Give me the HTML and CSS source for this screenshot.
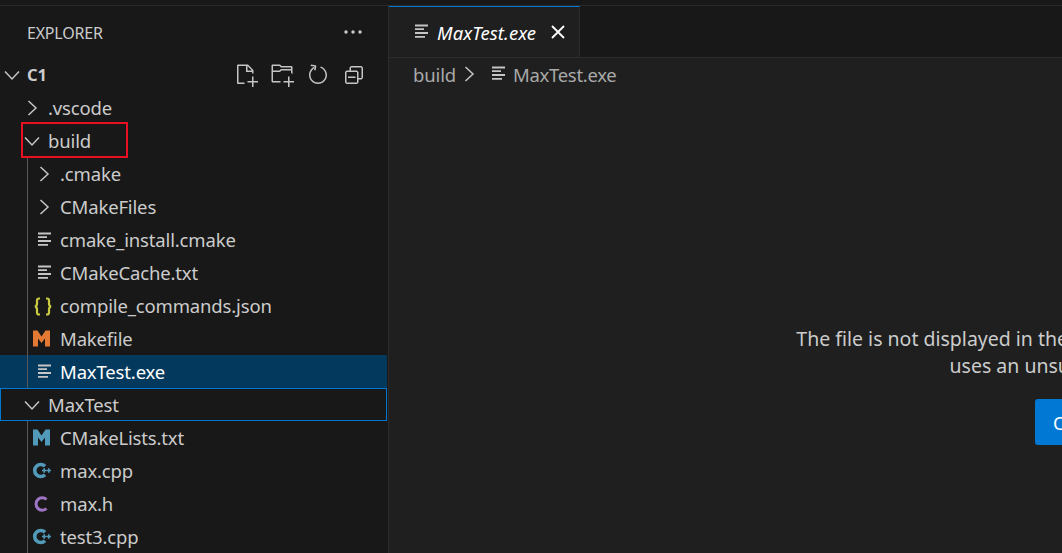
FILE: index.html
```html
<!DOCTYPE html>
<html lang="en">
<head>
<meta charset="utf-8">
<title>MaxTest.exe</title>
<link rel="stylesheet" href="styles.css">
</head>
<body>
<svg class="defs" width="0" height="0" aria-hidden="true">
  <symbol id="right" viewBox="0 0 24 24"><path d="M8.500 5l7.500 7-7.500 7" fill="none" stroke="currentColor" stroke-width="1.500"/></symbol>
  <symbol id="down" viewBox="0 0 24 24"><path d="M5 8.500l7 7.500 7-7.500" fill="none" stroke="currentColor" stroke-width="1.500"/></symbol>
  <symbol id="lines" viewBox="0 0 24 24"><path d="M6 5.500h13M6 9.200h9M6 13h13M6 16.800h10" fill="none" stroke="#c5c5c5" stroke-width="1.800"/></symbol>
  <symbol id="cpp" viewBox="0 0 24 24"><path d="M13 7.300a6 6 0 1 0 0 8.400" fill="none" stroke="#519aba" stroke-width="3.600"/><path d="M10 11.500h4.400M12.200 9.300v4.400M14.600 11.500h4.400M16.800 9.300v4.400" fill="none" stroke="#519aba" stroke-width="1.600"/></symbol>
  <symbol id="c" viewBox="0 0 24 24"><path d="M14.500 7.500a6.200 6.200 0 1 0 0 9" fill="none" stroke="#a074c4" stroke-width="3"/></symbol>
  <symbol id="m" viewBox="0 0 24 24"><path d="M1 19.500V3.500h4.500l4 6 4-6H18v16h-5v-8l-3.500 4.500L6 11.500v8z"/></symbol>
  <symbol id="json" viewBox="0 0 24 24"><path d="M8 4.500H7q-2 0-2 2v3q0 2.500-2 3 2 .5 2 3v3q0 2 2 2h1M14 4.500h1q2 0 2 2v3q0 2.500 2 3-2 .5-2 3v3q0 2-2 2h-1" fill="none" stroke="#cbcb41" stroke-width="2.200"/></symbol>
</svg>
<div class="titlestrip"></div>
<div class="workbench">
  <aside class="sidebar">
    <header class="side-head">
      <span class="side-title">EXPLORER</span>
      <svg class="dots" width="24" height="24" viewBox="0 0 24 24"><circle cx="5" cy="12" r="1.700"/><circle cx="12" cy="12" r="1.700"/><circle cx="19" cy="12" r="1.700"/></svg>
    </header>
    <div class="row root">
      <svg class="ico"><use href="#down"/></svg>
      <span class="label strong">C1</span>
      <div class="actions">
        <svg viewBox="0 0 16 16"><path fill-rule="evenodd" clip-rule="evenodd" d="M9.500 1.100l3.400 3.500.1.400v2h-1V6H8V2H3v11h4v1H2.500l-.5-.5v-12l.5-.5h6.700l.3.1zM9 2v3h2.900L9 2zm4 14h-1v-3H9v-1h3V9h1v3h3v1h-3v3z"/></svg>
        <svg viewBox="0 0 16 16"><path fill-rule="evenodd" clip-rule="evenodd" d="M14.500 2H7.710l-.85-.85L6.510 1h-5l-.5.5v11l.5.5H7v-1H1.990V6h4.490l.35-.15.86-.86H14v1.500l1 1V2.500L14.500 2zm-.51 2h-6.500l-.35.15-.86.86H2v-3h4.290l.85.85.36.15H14l-.01.990zM13 16h-1v-3H9v-1h3V9h1v3h3v1h-3v3z"/></svg>
        <svg viewBox="0 0 16 16"><path d="M5.563 2.516C3.463 3.450 2 5.554 2 8c0 3.314 2.686 6 6 6s6-2.686 6-6c0-2.675-1.750-4.941-4.168-5.715l-.302.953C11.543 3.885 13 5.772 13 8c0 2.761-2.239 5-5 5s-5-2.239-5-5c0-1.689.837-3.182 2.120-4.088z"/><path d="M5.700 2.400L3 2l.4-1 3 .5.5.5-.5 3-1-.4z"/></svg>
        <svg viewBox="0 0 16 16"><path fill-rule="evenodd" clip-rule="evenodd" d="M9 9H4v1h5V9zM5 3l1-1h7l1 1v7l-1 1h-2v2l-1 1H3l-1-1V6l1-1h2V3zm1 2h4l1 1v4h2V3H6v2zm4 1H3v7h7V6z"/></svg>
      </div>
    </div>
    <div class="row l1"><svg class="ico"><use href="#right"/></svg><span class="label">.vscode</span></div>
    <div class="row l1"><svg class="ico"><use href="#down"/></svg><span class="label">build</span></div>
    <div class="row l2"><svg class="ico"><use href="#right"/></svg><span class="label">.cmake</span></div>
    <div class="row l2"><svg class="ico"><use href="#right"/></svg><span class="label">CMakeFiles</span></div>
    <div class="row l2"><svg class="ico"><use href="#lines"/></svg><span class="label">cmake_install.cmake</span></div>
    <div class="row l2"><svg class="ico"><use href="#lines"/></svg><span class="label">CMakeCache.txt</span></div>
    <div class="row l2"><svg class="ico"><use href="#json"/></svg><span class="label">compile_commands.json</span></div>
    <div class="row l2"><svg class="ico orange"><use href="#m"/></svg><span class="label">Makefile</span></div>
    <div class="row l2 selected"><svg class="ico"><use href="#lines"/></svg><span class="label">MaxTest.exe</span></div>
    <div class="row l1 focused"><svg class="ico"><use href="#down"/></svg><span class="label">MaxTest</span></div>
    <div class="row l2"><svg class="ico blue"><use href="#m"/></svg><span class="label">CMakeLists.txt</span></div>
    <div class="row l2"><svg class="ico"><use href="#cpp"/></svg><span class="label">max.cpp</span></div>
    <div class="row l2"><svg class="ico"><use href="#c"/></svg><span class="label">max.h</span></div>
    <div class="row l2"><svg class="ico"><use href="#cpp"/></svg><span class="label">test3.cpp</span></div>
    <div class="annotation"></div>
  </aside>
  <main class="editor">
    <div class="tabs">
      <div class="tab">
        <svg class="ico"><use href="#lines"/></svg>
        <span class="tab-name">MaxTest.exe</span>
        <svg class="close" width="24" height="24" viewBox="0 0 24 24"><path d="M6 6l12 12M18 6L6 18" fill="none" stroke="#fff" stroke-width="1.800"/></svg>
      </div>
    </div>
    <nav class="crumbs">
      <span>build</span>
      <svg class="ico crumb-sep"><use href="#right"/></svg>
      <svg class="ico"><use href="#lines"/></svg>
      <span class="crumb-file">MaxTest.exe</span>
    </nav>
    <section class="placeholder">
      <p>The file is not displayed in the text editor because it is either binary or<br>uses an unsupported text encoding.</p>
      <button class="open">Open Anyway</button>
    </section>
  </main>
</div>
</body>
</html>
```
FILE: styles.css
```css
* { box-sizing: border-box; }
html, body { margin: 0; height: 100%; overflow: hidden; }
body {
  background: #181818;
  color: #cccccc;
  font-family: "Noto Sans", "Open Sans", sans-serif;
  font-size: 18.5px;
  letter-spacing: -0.15px;
  display: flex;
  flex-direction: column;
}
.defs { display: block; height: 0; }
.titlestrip { flex: none; height: 6px; border-bottom: 1px solid #2b2b2b; }
.workbench { flex: 1; display: flex; min-height: 0; }

.sidebar {
  flex: none;
  width: 389px;
  padding-right: 1px;
  border-right: 1px solid #2b2b2b;
  position: relative;
  overflow: hidden;
}
.side-head {
  height: 52px;
  display: flex;
  align-items: center;
  justify-content: space-between;
  padding: 0 22px 0 27px;
  font-size: 16px;
}
.side-title { letter-spacing: -0.2px; margin-top: 2px; }
.dots { fill: #cccccc; margin-top: -1px; }

.row {
  height: 33px;
  display: flex;
  align-items: center;
  white-space: nowrap;
  color: #cccccc;
}
.root { padding-left: 0; }
.l1 { padding-left: 20px; }
.l2 {
  padding-left: 32px;
  background: linear-gradient(#585858, #585858) 27px 0 / 1px 100% no-repeat;
}
.ico { flex: none; width: 24px; height: 24px; color: #c5c5c5; }
.orange { fill: #e37933; }
.blue { fill: #519aba; }
.label { margin-left: 4px; }
.root .label { margin-left: 3px; }
.strong { font-weight: 700; font-size: 16.5px; }
.selected { background-color: #04395e; color: #ffffff; }
.focused { border: 1px solid #0078d4; padding-left: 19px; }
.actions { margin-left: auto; margin-right: 21px; display: flex; gap: 12px; }
.actions svg { width: 24px; height: 24px; fill: #c5c5c5; display: block; }

.annotation {
  position: absolute;
  left: 21px;
  top: 116px;
  width: 107px;
  height: 36px;
  border: 2px solid #e81123;
}

.editor { flex: none; width: 1451px; background: #1f1f1f; display: flex; flex-direction: column; }
.tabs { flex: none; height: 52px; background: #181818; border-bottom: 1px solid #2b2b2b; display: flex; }
.tab {
  width: 191px;
  height: 51px;
  background: #1f1f1f;
  border-top: 1px solid #0078d4;
  border-right: 1px solid #2b2b2b;
  display: flex;
  align-items: center;
  padding-left: 20px;
  color: #ffffff;
}
.tab-name { font-style: italic; margin-left: 4px; letter-spacing: 0.1px; }
.close { margin-left: 10px; }
.crumbs {
  flex: none;
  height: 32px;
  display: flex;
  align-items: center;
  padding-left: 24px;
  color: #a9a9a9;
}
.crumb-sep { margin-left: 1px; margin-right: 5px; }
.crumb-file { margin-left: 3px; letter-spacing: -0.3px; }
.placeholder { flex: 1; padding-top: 235px; text-align: center; }
.placeholder p { margin: 0 0 20px; line-height: 27px; color: #cccccc; font-size: 19.5px; letter-spacing: 0; }
.open {
  display: block;
  margin: 0 auto;
  width: 159px;
  height: 46px;
  border: 0;
  border-radius: 3px;
  padding: 0 0 0 18px;
  text-align: left;
  background: #0078d4;
  color: #ffffff;
  font: inherit;
  letter-spacing: inherit;
}
```
